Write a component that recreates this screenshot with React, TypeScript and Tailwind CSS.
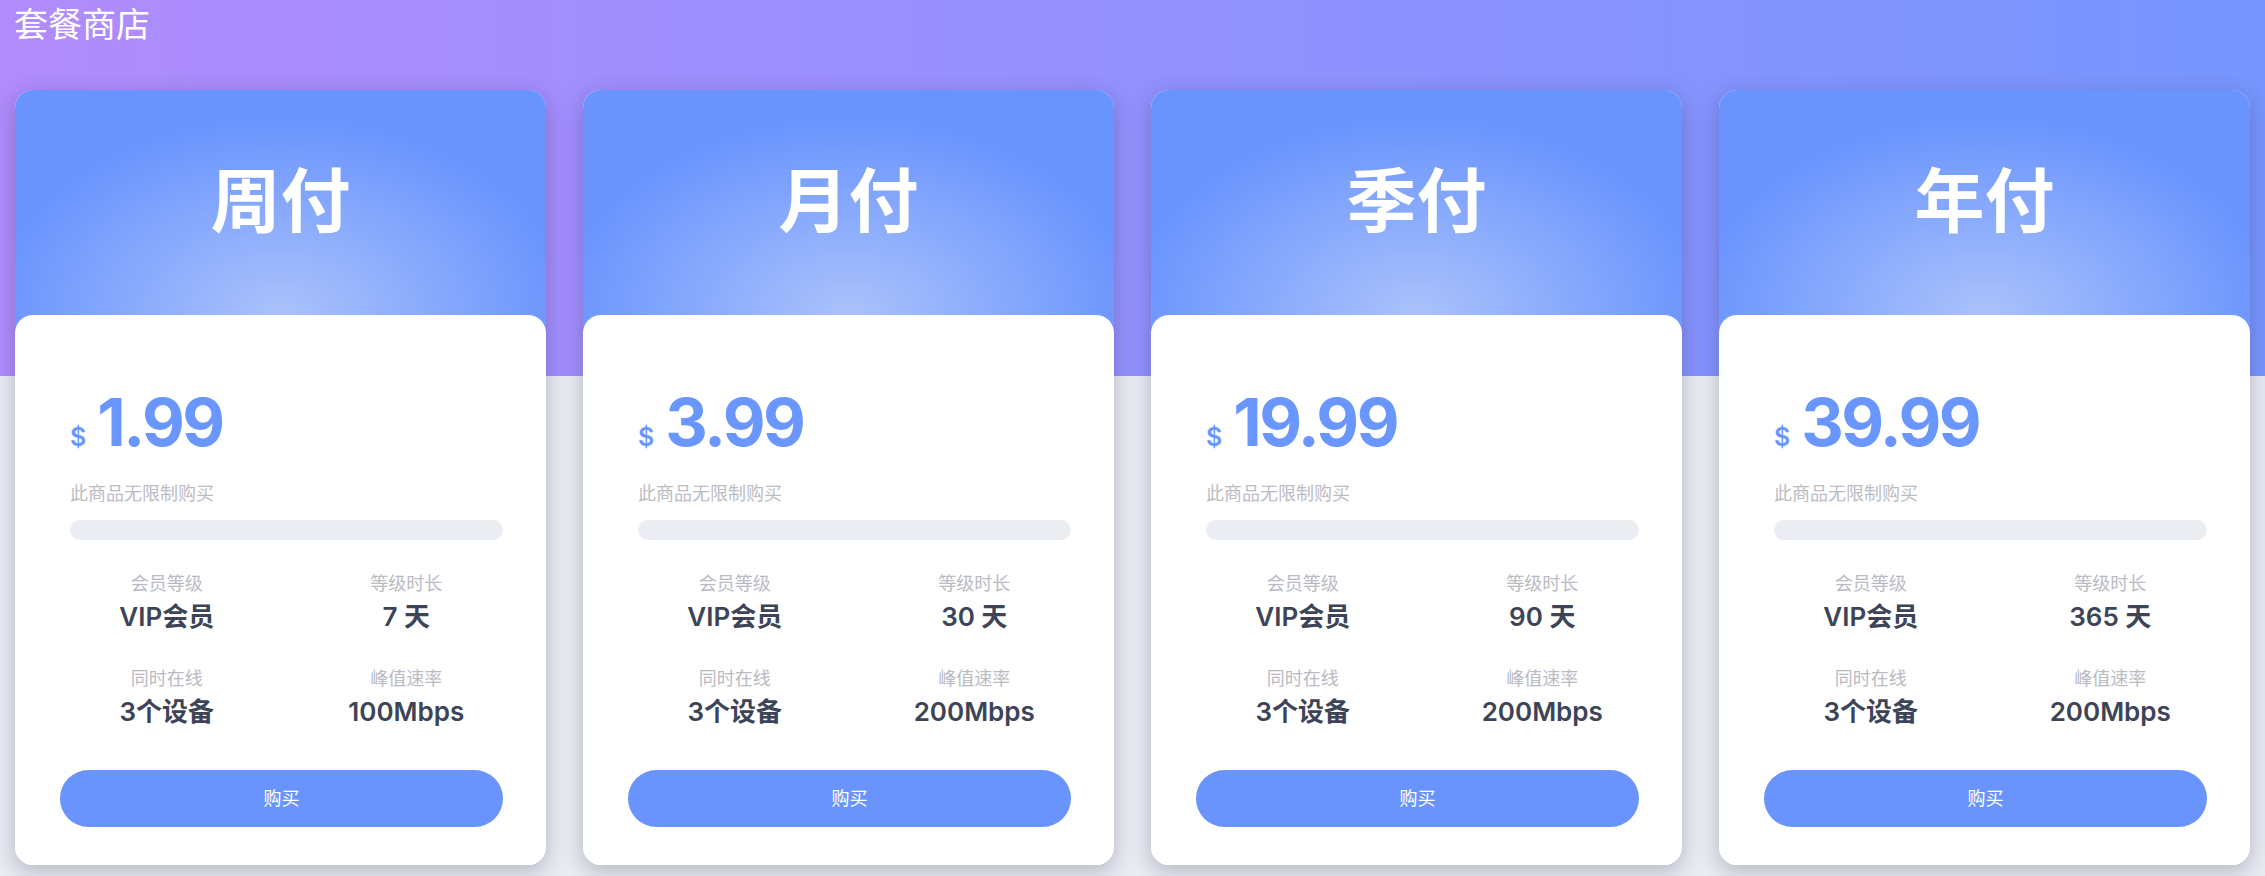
const plans = [
  { name: '周付', price: '1.99', days: '7 天', speed: '100Mbps' },
  { name: '月付', price: '3.99', days: '30 天', speed: '200Mbps' },
  { name: '季付', price: '19.99', days: '90 天', speed: '200Mbps' },
  { name: '年付', price: '39.99', days: '365 天', speed: '200Mbps' },
]

const font = { fontFamily: 'Inter, "Noto Sans CJK SC", sans-serif' }

function Stat({ label, value }: { label: string; value: string }) {
  return (
    <div className="flex flex-col items-center">
      <div className="text-[18px] leading-[27px] text-[#b9bac4]">{label}</div>
      <div className="mt-[3px] text-[26px] leading-[34px] font-semibold text-[#3d4457]">{value}</div>
    </div>
  )
}

function PlanCard({ plan }: { plan: (typeof plans)[number] }) {
  return (
    <div className="overflow-hidden rounded-[18px] bg-white shadow-[0_6px_22px_rgba(40,40,70,0.28)]">
      <div className="flex h-[243px] items-start justify-center bg-[radial-gradient(ellipse_290px_200px_at_50%_93%,#abc2fb_0%,#6994fe_100%)] pt-[72px]">
        <h2 className="text-[70px] leading-[80px] font-bold text-white">{plan.name}</h2>
      </div>
      <div className="relative -mt-[18px] rounded-t-[18px] bg-white pb-[38px]">
        <div className="flex items-baseline pt-[73px] pl-[55px]">
          <span className="mr-[11px] text-[25px] font-semibold text-[#6a96ff]">$</span>
          <span className="text-[66px] leading-[68px] font-bold tracking-[-2.5px] text-[#6a96ff]">{plan.price}</span>
        </div>
        <p className="mt-[23px] pl-[55px] text-[18px] leading-[27px] text-[#bbbcc5]">此商品无限制购买</p>
        <div className="mt-[13px] mr-[43px] ml-[55px] h-[20px] rounded-[10px] bg-[#eaeef2]" />
        <div className="mt-[30px] mr-[20px] ml-[32px] grid grid-cols-2 gap-y-[31px]">
          <Stat label="会员等级" value="VIP会员" />
          <Stat label="等级时长" value={plan.days} />
          <Stat label="同时在线" value="3个设备" />
          <Stat label="峰值速率" value={plan.speed} />
        </div>
        <div className="mt-[41px] mr-[43px] ml-[45px]">
          <button className="h-[57px] w-full rounded-full bg-[#6994fe] text-[18px] text-white">购买</button>
        </div>
      </div>
    </div>
  )
}

export default function App() {
  return (
    <div
      style={font}
      className="h-[876px] w-full overflow-hidden bg-[#e9ecf3] bg-[linear-gradient(to_right,#b18bfc,#9c8ffe_35%,#7796fe)] bg-[length:100%_376px] bg-no-repeat"
    >
      <h1 className="pl-[14px] text-[34px] leading-[50px] font-normal text-white">套餐商店</h1>
      <div className="mt-[40px] grid grid-cols-4 gap-[37px] px-[15px]">
        {plans.map((p) => (
          <PlanCard key={p.name} plan={p} />
        ))}
      </div>
    </div>
  )
}
